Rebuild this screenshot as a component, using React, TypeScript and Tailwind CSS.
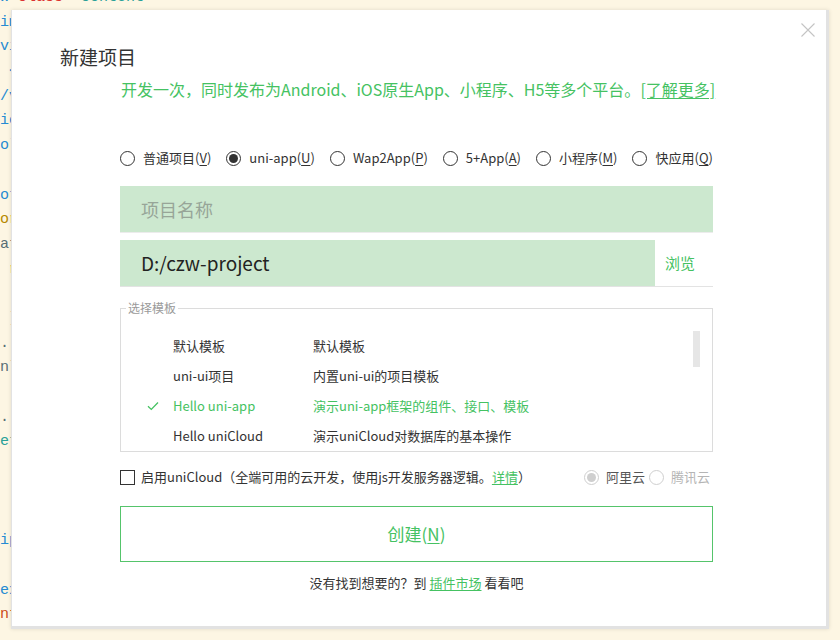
import React from "react";

// editor text peeking out behind the dialog (only the first chars are visible)
const codeLines: { text: string; color: string }[] = [
  { text: "w", color: "text-[#268bd2]" },
  { text: "im", color: "text-[#268bd2]" },
  { text: "vi", color: "text-[#268bd2]" },
  { text: " <", color: "text-[#268bd2]" },
  { text: "/v", color: "text-[#268bd2]" },
  { text: "ie", color: "text-[#268bd2]" },
  { text: "ol", color: "text-[#268bd2]" },
  { text: "", color: "" },
  { text: "ot", color: "text-[#268bd2]" },
  { text: "or", color: "text-[#b58900]" },
  { text: "at", color: "text-[#586e75]" },
  { text: " r", color: "text-[#b58900]" },
  { text: "", color: "" },
  { text: " ]", color: "text-[#586e75]" },
  { text: ".", color: "text-[#586e75]" },
  { text: "nl", color: "text-[#586e75]" },
  { text: "", color: "" },
  { text: ".", color: "text-[#586e75]" },
  { text: "et", color: "text-[#2aa198]" },
  { text: "", color: "" },
  { text: "", color: "" },
  { text: "", color: "" },
  { text: "ip", color: "text-[#268bd2]" },
  { text: "", color: "" },
  { text: "ex", color: "text-[#268bd2]" },
  { text: "nt", color: "text-[#cb4b16]" },
];

const templates = [
  { name: "默认模板", desc: "默认模板", selected: false },
  { name: "uni-ui项目", desc: "内置uni-ui的项目模板", selected: false },
  { name: "Hello uni-app", desc: "演示uni-app框架的组件、接口、模板", selected: true },
  { name: "Hello uniCloud", desc: "演示uniCloud对数据库的基本操作", selected: false },
  { name: "uni-starter", desc: "云端一体应用快速开发模板", selected: false },
];

const projectTypes = [
  { label: "普通项目", key: "V", checked: false },
  { label: "uni-app", key: "U", checked: true },
  { label: "Wap2App", key: "P", checked: false },
  { label: "5+App", key: "A", checked: false },
  { label: "小程序", key: "M", checked: false },
  { label: "快应用", key: "Q", checked: false },
];

interface RadioProps {
  checked?: boolean;
  disabled?: boolean;
}

const Radio = ({ checked = false, disabled = false }: RadioProps) => {
  const ring = disabled ? "border-[#cfcfcf]" : "border-[#333]";
  return (
    <span
      className={`w-[15px] h-[15px] rounded-full border bg-white flex items-center justify-center shrink-0 ${ring}`}
    >
      {checked && (
        <span
          className={
            disabled
              ? "w-[9px] h-[9px] rounded-full bg-[#cfcfcf]"
              : "w-[9px] h-[9px] rounded-full bg-[#333]"
          }
        />
      )}
    </span>
  );
};

const App = () => {
  return (
    <div className="relative w-[840px] h-[640px] overflow-hidden bg-[#fdf6e3]">
      {/* Background editor */}
      <div className="-mt-[14px] font-['Liberation_Mono',monospace] text-[15px] leading-[24.7px] whitespace-pre">
        <div className="h-[24.7px]">
          <span className="text-[#268bd2]">w </span>
          <span className="text-[#dc322f]">class</span>
          <span className="text-[#586e75]">=</span>
          <span className="text-[#2aa198]">"content"</span>
          <span className="text-[#268bd2]">{">"}</span>
        </div>
        {codeLines.slice(1).map((line, i) => (
          <div key={i} className={`h-[24.7px] ${line.color}`}>
            {line.text}
          </div>
        ))}
      </div>

      {/* Dialog */}
      <div className="absolute left-[11px] top-[10px] w-[818px] h-[619px] bg-white border-r-[3px] border-b-[3px] border-l border-[#e2e2e2] shadow-[0_0_4px_rgba(0,0,0,0.12)] font-['Noto_Sans_CJK_SC','Noto_Sans',sans-serif] text-[#333]">
        <button className="absolute top-[12px] right-[10px] w-[16px] h-[16px] text-[#c4c4c4]">
          <svg viewBox="0 0 16 16" width="16" height="16" fill="none" stroke="currentColor" strokeWidth="1.1">
            <path d="M1.5 1.5 L14.5 14.5 M14.5 1.5 L1.5 14.5" />
          </svg>
        </button>

        <div className="pt-[33px]">
          <h1 className="ml-[48px] h-[28px] text-[19px] leading-[28px] font-normal text-[#333]">
            新建项目
          </h1>
          <p className="mt-[6px] ml-[109px] h-[24px] text-[16px] leading-[24px] text-[#45c262] whitespace-nowrap">
            开发一次，同时发布为Android、iOS原生App、小程序、H5等多个平台。
            <a className="underline underline-offset-2">[了解更多]</a>
          </p>

          <div className="ml-[108px] w-[593px]">
            {/* Project type */}
            <div className="mt-[47px] h-[20px] flex items-center justify-between text-[13px]">
              {projectTypes.map((t) => (
                <label key={t.key} className="flex items-center gap-[8px]">
                  <Radio checked={t.checked} />
                  <span className="whitespace-nowrap">
                    {t.label}(<span className="underline underline-offset-2">{t.key}</span>)
                  </span>
                </label>
              ))}
            </div>

            {/* Name */}
            <div className="mt-[18px] h-[47px] border-b border-[#ececec]">
              <div className="h-[46px] bg-[#cce8cf] pl-[21px] flex items-center text-[18px] text-[#97a598]">
                项目名称
              </div>
            </div>

            {/* Path */}
            <div className="mt-[7px] h-[47px] border-b border-[#e3e3e3] flex">
              <div className="w-[535px] h-[46px] bg-[#cce8cf] pl-[21px] flex items-center text-[19px] text-[#222]">
                D:/czw-project
              </div>
              <div className="flex-1 flex items-center pl-[10px] text-[15px] text-[#45c262]">浏览</div>
            </div>

            {/* Template */}
            <fieldset className="mt-[13px] border border-[#dcdcdc] h-[152px]">
              <legend className="ml-[5px] px-[2px] text-[12px] leading-[16px] text-[#9a9a9a]">选择模板</legend>
              <div className="relative mt-[15px] h-[120px] overflow-hidden text-[13px]">
                {templates.map((t) => (
                  <div
                    key={t.name}
                    className={`h-[30px] pl-[26px] grid grid-cols-[26px_140px_1fr] items-center ${
                      t.selected ? "text-[#45c262]" : "text-[#333]"
                    }`}
                  >
                    <span>
                      {t.selected && (
                        <svg viewBox="0 0 12 10" width="12" height="10" fill="none" stroke="#45c262" strokeWidth="1.3">
                          <path d="M1 5.2 L4.3 8.4 L11 1.5" />
                        </svg>
                      )}
                    </span>
                    <span className="whitespace-nowrap">{t.name}</span>
                    <span className="whitespace-nowrap">{t.desc}</span>
                  </div>
                ))}
                <div className="absolute right-[12px] top-[-1px] w-[7px] h-[37px] bg-[#e6e6e6]" />
              </div>
            </fieldset>

            {/* uniCloud */}
            <div className="mt-[15px] h-[20px] flex items-center text-[13px]">
              <span className="w-[15px] h-[15px] border border-[#333] shrink-0" />
              <span className="ml-[6px] whitespace-nowrap">
                启用uniCloud（全端可用的云开发，使用js开发服务器逻辑。
                <a className="text-[#45c262] underline underline-offset-2">详情</a>）
              </span>
              <div className="ml-auto mr-[3px] flex items-center">
                <Radio checked disabled />
                <span className="ml-[7px] text-[#555]">阿里云</span>
                <span className="ml-[4px]">
                  <Radio disabled />
                </span>
                <span className="ml-[7px] text-[#b5b5b5]">腾讯云</span>
              </div>
            </div>

            {/* Create */}
            <button className="mt-[19px] w-full h-[56px] border border-[#55c46b] text-[17px] text-[#45c262] flex items-center justify-center">
              创建(<span className="underline underline-offset-2">N</span>)
            </button>

            <p className="mt-[11px] h-[20px] text-center text-[13px] leading-[20px] text-[#333]">
              没有找到想要的？到 <a className="text-[#45c262] underline underline-offset-2">插件市场</a> 看看吧
            </p>
          </div>
        </div>
      </div>
    </div>
  );
};

export default App;
